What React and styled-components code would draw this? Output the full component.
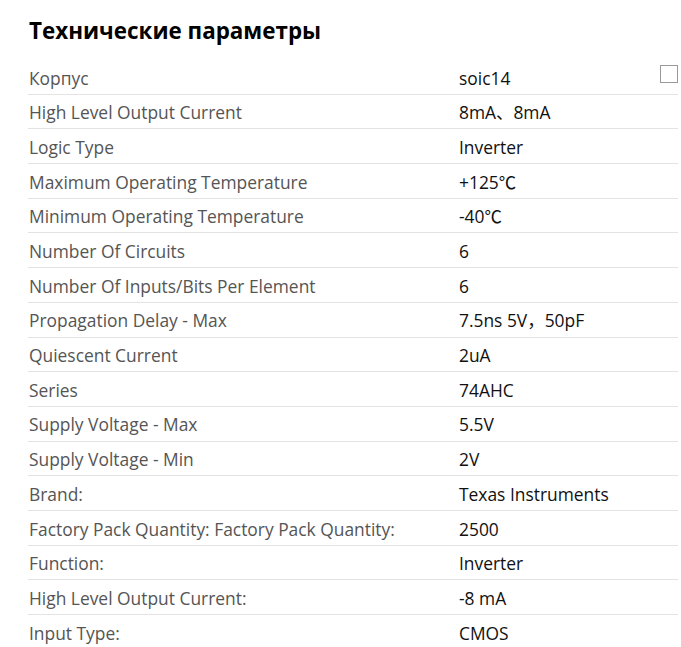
import React from "react";
import styled, { createGlobalStyle } from "styled-components";

const Global = createGlobalStyle`
  html, body { margin: 0; padding: 0; background: #fff; overflow: hidden; }
  body { font-family: "Open Sans", "Noto Sans CJK SC", "Noto Sans", sans-serif; }
`;

const Page = styled.div`
  width: 681px;
  padding: 15px 3px 0 28px;
  box-sizing: border-box;
`;

const Title = styled.h2`
  margin: 0 0 13px 1px;
  font-size: 22.4px;
  line-height: 32px;
  font-weight: 700;
  color: #000;
`;

const Table = styled.div`
  display: flex;
  flex-direction: column;
`;

const Row = styled.div`
  display: grid;
  grid-template-columns: 431px 1fr 18px;
  align-items: start;
  height: 34.7px;
  box-sizing: border-box;
  padding-top: 5.6px;
  border-bottom: 1px solid #e3e3e3;
  &:last-child { border-bottom: none; }
`;

const Label = styled.div`
  padding-left: 1px;
  font-size: 17.4px;
  line-height: 24px;
  color: #555;
  white-space: nowrap;
`;

const Value = styled.div`
  font-size: 17.4px;
  line-height: 24px;
  color: #111;
  white-space: nowrap;
`;

const Check = styled.span`
  display: block;
  width: 18px;
  height: 18px;
  margin-top: -0.2px;
  box-sizing: border-box;
  border: 1.5px solid #999;
  background: #fff;
`;

const rows = [
  ["Корпус", "soic14"],
  ["High Level Output Current", "8mA、8mA"],
  ["Logic Type", "Inverter"],
  ["Maximum Operating Temperature", "+125℃"],
  ["Minimum Operating Temperature", "-40℃"],
  ["Number Of Circuits", "6"],
  ["Number Of Inputs/Bits Per Element", "6"],
  ["Propagation Delay - Max", "7.5ns 5V，50pF"],
  ["Quiescent Current", "2uA"],
  ["Series", "74AHC"],
  ["Supply Voltage - Max", "5.5V"],
  ["Supply Voltage - Min", "2V"],
  ["Brand:", "Texas Instruments"],
  ["Factory Pack Quantity: Factory Pack Quantity:", "2500"],
  ["Function:", "Inverter"],
  ["High Level Output Current:", "-8 mA"],
  ["Input Type:", "CMOS"],
];

export default function App() {
  return (
    <Page>
      <Global />
      <Title>Технические параметры</Title>
      <Table>
        {rows.map(([l, v], i) => (
          <Row key={i}>
            <Label>{l}</Label>
            <Value>{v}</Value>
            {i === 0 ? <Check /> : <span />}
          </Row>
        ))}
      </Table>
    </Page>
  );
}
